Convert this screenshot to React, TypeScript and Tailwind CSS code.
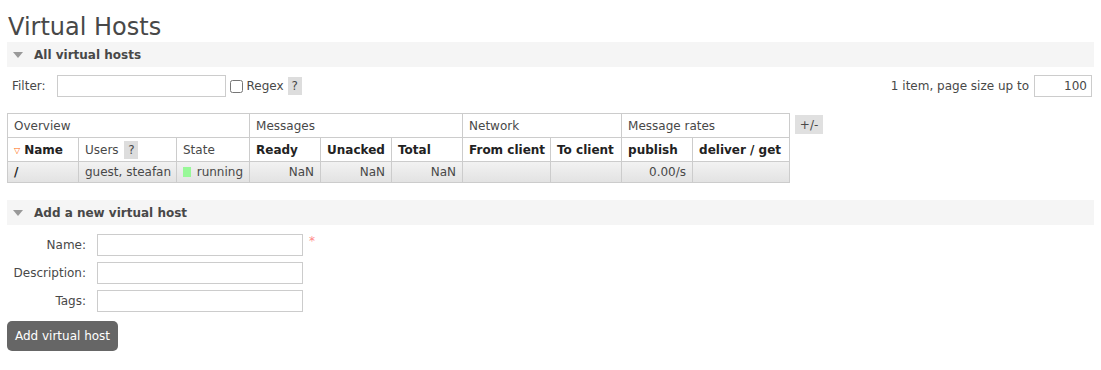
import { useState } from "react";

const font = { fontFamily: '"DejaVu Sans", Verdana, sans-serif' };

const SectionBar = ({ title }: { title: string }) => (
  <div className="flex h-[25px] items-center gap-[11px] bg-[#f5f5f5] pl-[6px]">
    <span className="mt-[1px] h-0 w-0 border-x-[5px] border-t-[6px] border-x-transparent border-t-[#999]" />
    <span className="text-[12px] font-bold whitespace-nowrap text-[#484848]">{title}</span>
  </div>
);

const Help = () => (
  <span className="inline-flex h-[18px] w-[14px] items-center justify-center bg-[#ddd] text-[12px] font-normal text-[#484848]">
    ?
  </span>
);

const th = "border border-[#ccc] px-[6px] text-left align-middle whitespace-nowrap";
const td = "border border-[#ccc] px-[6px] align-middle whitespace-nowrap";
const bold = `${th} font-bold text-[#222]`;

export default function App() {
  const [filter, setFilter] = useState("");

  return (
    <div style={font} className="w-[1101px] bg-white px-[7px] pt-[12px] text-[12px] text-[#484848]">
      <h1 className="h-[30px] pl-[1px] text-[24px] leading-[30px] font-normal text-[#484848]">Virtual Hosts</h1>

      <SectionBar title="All virtual hosts" />

      <div className="flex items-center justify-between pt-[8px] pl-[5px] pr-[2px]">
        <div className="flex items-center">
          <span>Filter:</span>
          <input
            value={filter}
            onChange={(e) => setFilter(e.target.value)}
            className="ml-[11px] h-[22px] w-[169px] border border-[#ccc] outline-none"
          />
          <input type="checkbox" className="ml-[4px] h-[13px] w-[13px]" />
          <span className="ml-[4px]">Regex</span>
          <span className="ml-[4px]">
            <Help />
          </span>
        </div>
        <div className="flex items-center">
          <span>1 item, page size up to</span>
          <input
            defaultValue="100"
            className="ml-[5px] h-[22px] w-[58px] border border-[#ccc] px-[4px] text-right outline-none"
          />
        </div>
      </div>

      <div className="mt-[16px] flex items-start">
        <table className="w-[782px] table-fixed border-collapse">
          <colgroup>
            <col className="w-[71px]" />
            <col className="w-[98px]" />
            <col className="w-[73px]" />
            <col className="w-[71px]" />
            <col className="w-[71px]" />
            <col className="w-[71px]" />
            <col className="w-[88px]" />
            <col className="w-[71px]" />
            <col className="w-[71px]" />
            <col className="w-[97px]" />
          </colgroup>
          <thead>
            <tr className="h-[24px]">
              <th colSpan={3} className={`${th} font-normal`}>Overview</th>
              <th colSpan={3} className={`${th} font-normal`}>Messages</th>
              <th colSpan={2} className={`${th} font-normal`}>Network</th>
              <th colSpan={2} className={`${th} font-normal`}>Message rates</th>
            </tr>
            <tr className="h-[24px]">
              <th className={bold}>
                <span className="mr-[4px] align-[1px] text-[8px] text-[#f60]">▽</span>Name
              </th>
              <th className={`${th} font-normal`}>
                Users <span className="ml-[2px]"><Help /></span>
              </th>
              <th className={`${th} font-normal`}>State</th>
              <th className={bold}>Ready</th>
              <th className={bold}>Unacked</th>
              <th className={bold}>Total</th>
              <th className={bold}>From client</th>
              <th className={bold}>To client</th>
              <th className={bold}>publish</th>
              <th className={bold}>deliver / get</th>
            </tr>
          </thead>
          <tbody>
            <tr className="h-[21px] bg-gradient-to-b from-[#f2f2f2] to-[#e2e2e2]">
              <td className={`${td} font-bold text-[#222]`}>/</td>
              <td className={td}>guest, steafan</td>
              <td className={td}>
                <span className="flex items-center gap-[6px]">
                  <span className="h-[10px] w-[10px] bg-[#98f898]" />
                  running
                </span>
              </td>
              <td className={`${td} text-right`}>NaN</td>
              <td className={`${td} text-right`}>NaN</td>
              <td className={`${td} text-right`}>NaN</td>
              <td className={td}></td>
              <td className={td}></td>
              <td className={`${td} text-right`}>0.00/s</td>
              <td className={td}></td>
            </tr>
          </tbody>
        </table>
        <span className="mt-[2px] ml-[5px] flex h-[19px] w-[28px] items-center justify-center bg-[#e0e0e0]">+/-</span>
      </div>

      <div className="mt-[17px]">
        <SectionBar title="Add a new virtual host" />
      </div>

      <div className="grid grid-cols-[78px_auto] items-center gap-x-[11px] gap-y-[6px] pt-[9px] pl-[1px]">
        <span className="text-right">Name:</span>
        <div className="flex items-start">
          <input className="h-[22px] w-[206px] border border-[#ccc] outline-none" />
          <span className="ml-[6px] -mt-[2px] text-[12px] text-[#f88]">*</span>
        </div>
        <span className="text-right">Description:</span>
        <input className="h-[22px] w-[206px] border border-[#ccc] outline-none" />
        <span className="text-right">Tags:</span>
        <input className="h-[22px] w-[206px] border border-[#ccc] outline-none" />
      </div>

      <button className="mt-[9px] mb-[19px] h-[30px] w-[111px] rounded-[5px] bg-[#666] text-[12px] whitespace-nowrap text-white">
        Add virtual host
      </button>
    </div>
  );
}
